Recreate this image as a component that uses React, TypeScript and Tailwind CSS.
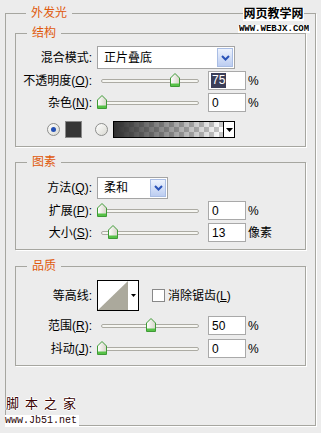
import React from "react";

const FONT = "[font-family:'Liberation_Sans','Noto_Sans_CJK_SC',sans-serif]";

function Label({ children }: { children: React.ReactNode }) {
  return (
    <div className="w-[76px] text-right text-[12px] leading-[14px] text-black whitespace-nowrap">
      {children}
    </div>
  );
}

function Chevron() {
  return (
    <svg width="9" height="6" viewBox="0 0 9 6">
      <path d="M1 1 L4.5 4.5 L8 1" fill="none" stroke="#2a53b8" strokeWidth="2" />
    </svg>
  );
}

function Select({ width, height, text }: { width: string; height: string; text: string }) {
  return (
    <div className={`${width} ${height} border border-[#a4a4a4] bg-white flex items-center justify-between pr-[1px]`}>
      <span className="pl-[6px] text-[12px] leading-[14px] text-black">{text}</span>
      <div className="w-[16px] h-[calc(100%-2px)] border border-[#a9bde4] bg-linear-to-b from-[#eef3fd] to-[#bccdf1] flex items-center justify-center">
        <Chevron />
      </div>
    </div>
  );
}

function Thumb() {
  return (
    <svg width="10" height="14" viewBox="0 0 10 14">
      <defs>
        <linearGradient id="tg" x1="0" y1="0" x2="1" y2="0">
          <stop offset="0" stopColor="#ffffff" />
          <stop offset="1" stopColor="#d6d4c8" />
        </linearGradient>
      </defs>
      <path d="M0.5 5 L5 0.5 L9.5 5 V13.5 H0.5 Z" fill="url(#tg)" stroke="#3f9a36" strokeWidth="1" />
      <rect x="1" y="10.5" width="8" height="2.5" fill="#57c247" />
    </svg>
  );
}

function Slider({ pos }: { pos: number }) {
  return (
    <div className="relative w-[106px] h-[19px]">
      <div className="absolute left-[4px] top-[8px] w-[98px] h-[4px] rounded-full border border-[#acaba3] bg-[#f6f6f2]" />
      <div className="absolute top-[2px]" style={{ left: `${pos}px` }}>
        <Thumb />
      </div>
    </div>
  );
}

function Input({ value, selected }: { value: string; selected?: boolean }) {
  return (
    <div className="w-[38px] h-[19px] border border-[#a9a9a9] bg-white flex items-center pl-[2px] text-[12px] leading-[14px]">
      {selected ? (
        <span className="bg-[#3b3e58] text-white px-[1px] leading-[15px]">{value}</span>
      ) : (
        <span className="text-black pl-[1px]">{value}</span>
      )}
    </div>
  );
}

function SliderRow({
  label,
  pos,
  value,
  unit,
  selected,
  className,
}: {
  label: React.ReactNode;
  pos: number;
  value: string;
  unit: string;
  selected?: boolean;
  className?: string;
}) {
  return (
    <div className={`flex items-center h-[19px] ${className ?? ""}`}>
      <Label>{label}</Label>
      <div className="ml-[5px]">
        <Slider pos={pos} />
      </div>
      <div className="ml-[5px]">
        <Input value={value} selected={selected} />
      </div>
      <span className="ml-[2px] text-[12px] leading-[14px] text-black">{unit}</span>
    </div>
  );
}

function Radio({ checked }: { checked?: boolean }) {
  return (
    <div className="w-[13px] h-[13px] rounded-full border border-[#8d8e8c] bg-linear-to-br from-[#ffffff] to-[#d9d9d2] flex items-center justify-center">
      {checked && <div className="w-[5px] h-[5px] rounded-full bg-[#2450b4]" />}
    </div>
  );
}

function Legend({ children }: { children: React.ReactNode }) {
  return (
    <legend className="ml-[11px] px-[5px] text-[12px] leading-[14px] text-[#e05a0c]">{children}</legend>
  );
}

export default function App() {
  return (
    <div className={`relative w-[321px] h-[433px] overflow-hidden bg-[#ececec] pt-[6px] pl-[5px] ${FONT}`}>
      <fieldset className="w-[311px] h-[420px] border border-[#a6a6a0] shadow-[1px_1px_0_#ffffff] px-[9px]">
        <Legend>外发光</Legend>

        {/* 结构 */}
        <fieldset className="mt-[6px] h-[121px] border border-[#a6a6a0] shadow-[1px_1px_0_#ffffff]">
          <Legend>结构</Legend>
          <div className="pt-[6px] flex flex-col">
            <div className="flex items-center h-[23px]">
              <Label>混合模式:</Label>
              <div className="ml-[5px]">
                <Select width="w-[138px]" height="h-[23px]" text="正片叠底" />
              </div>
            </div>
            <SliderRow
              className="mt-[2px]"
              label={<>不透明度(<u>O</u>):</>}
              pos={73}
              value="75"
              unit="%"
              selected
            />
            <SliderRow className="mt-[3px]" label={<>杂色(<u>N</u>):</>} pos={0} value="0" unit="%" />
            <div className="mt-[9px] h-[17px] flex items-center pl-[31px]">
              <Radio checked />
              <div className="ml-[5px] w-[17px] h-[17px] border border-[#8a8a8a] bg-[#363636]" />
              <div className="ml-[13px]">
                <Radio />
              </div>
              <div className="ml-[5px] w-[122px] h-[17px] border border-black flex">
                <div className="w-[109px] h-full [background:repeating-conic-gradient(#c9c9c9_0%_25%,#ffffff_0%_50%)_0_0/10px_10px]">
                  <div className="w-full h-full bg-linear-to-r from-[#303030] to-[#30303000]" />
                </div>
                <div className="flex-1 border-l border-black bg-white flex items-center justify-center">
                  <svg width="7" height="4" viewBox="0 0 7 4">
                    <path d="M0 0 H7 L3.5 4 Z" fill="#000" />
                  </svg>
                </div>
              </div>
            </div>
          </div>
        </fieldset>

        {/* 图素 */}
        <fieldset className="mt-[8px] h-[95px] border border-[#a6a6a0] shadow-[1px_1px_0_#ffffff]">
          <Legend>图素</Legend>
          <div className="pt-[8px] flex flex-col">
            <div className="flex items-center h-[22px]">
              <Label>
                方法(<u>Q</u>):
              </Label>
              <div className="ml-[5px]">
                <Select width="w-[71px]" height="h-[22px]" text="柔和" />
              </div>
            </div>
            <SliderRow className="mt-[2px]" label={<>扩展(<u>P</u>):</>} pos={0} value="0" unit="%" />
            <SliderRow className="mt-[3px]" label={<>大小(<u>S</u>):</>} pos={11} value="13" unit="像素" />
          </div>
        </fieldset>

        {/* 品质 */}
        <fieldset className="mt-[9px] h-[107px] border border-[#a6a6a0] shadow-[1px_1px_0_#ffffff]">
          <Legend>品质</Legend>
          <div className="pt-[7px] flex flex-col">
            <div className="flex items-center h-[31px]">
              <Label>等高线:</Label>
              <div className="ml-[5px]">
                <svg width="42" height="31" viewBox="0 0 42 31">
                  <rect x="0.5" y="0.5" width="41" height="30" fill="#fff" stroke="#000" />
                  <polygon points="1,30 31,1 31,30" fill="#aba99c" />
                  <path d="M34 14 H39 L36.5 17 Z" fill="#000" />
                </svg>
              </div>
              <div className="ml-[13px] w-[13px] h-[13px] border border-[#888] bg-white" />
              <span className="ml-[3px] text-[12px] leading-[14px] text-black">
                消除锯齿(<u>L</u>)
              </span>
            </div>
            <SliderRow className="mt-[5px]" label={<>范围(<u>R</u>):</>} pos={49} value="50" unit="%" />
            <SliderRow className="mt-[4px]" label={<>抖动(<u>J</u>):</>} pos={0} value="0" unit="%" />
          </div>
        </fieldset>
      </fieldset>

      {/* watermarks */}
      <div className="absolute left-[243px] top-[8px] w-[61px] h-[13px] bg-white text-[12px] leading-[13px] font-bold text-black text-center">
        网页教学网
      </div>
      <div className="absolute left-[238px] top-[25px] w-[72px] h-[8px] bg-white text-[9px] leading-[8px] font-bold text-black text-center [font-family:'Liberation_Mono',monospace]">
        WWW.WEBJX.COM
      </div>
      <div className="absolute left-[6px] top-[396px] text-[13px] leading-[15px] tracking-[6px] text-[#3a0303] [text-shadow:1px_0_0_#fff,-1px_0_0_#fff,0_1px_0_#fff,0_-1px_0_#fff]">
        脚本之家
      </div>
      <div className="absolute left-[5px] top-[415px] w-[74px] h-[12px] bg-white text-[10px] leading-[12px] text-[#2a0505] [font-family:'Liberation_Mono',monospace]">
        www.Jb51.net
      </div>
    </div>
  );
}
